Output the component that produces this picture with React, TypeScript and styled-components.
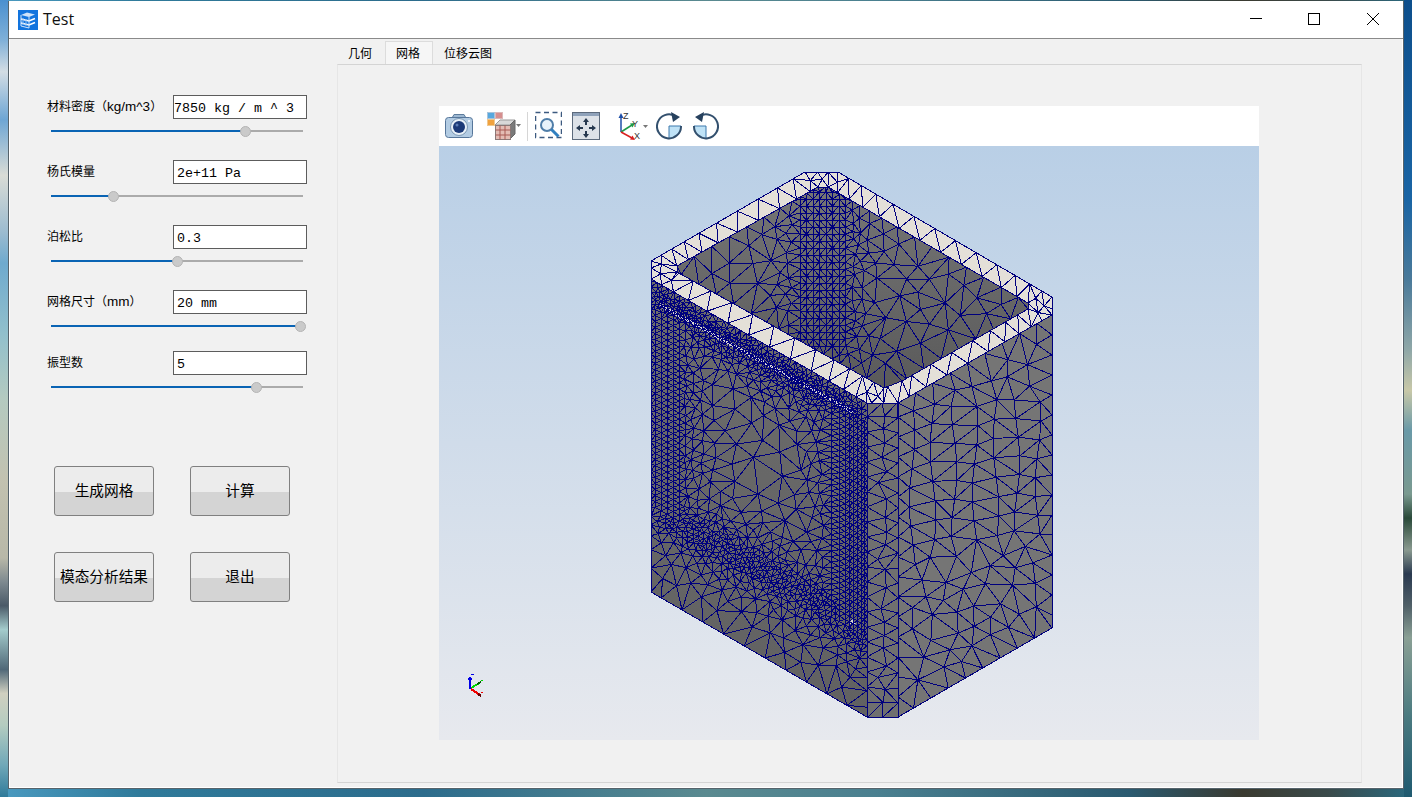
import React, { useMemo } from "react";
import styled, { createGlobalStyle } from "styled-components";

type P = [number, number];
type SizeFn = (x: number, y: number) => number;

const CJK = `"Noto Sans CJK SC", "Liberation Sans", sans-serif`;
const LABEL_FONT = `"Liberation Sans", "Noto Sans CJK SC", sans-serif`;
const MESH_BLUE = "#00007e";

const GlobalStyle = createGlobalStyle`
  html, body {
    margin: 0;
    padding: 0;
    overflow: hidden;
    font-family: ${CJK};
  }
`;

/* ---------- mesh generation ---------- */

const makeRandom = (seed: number) => () => {
  seed = (seed + 0x6d2b79f5) | 0;
  let t = Math.imul(seed ^ (seed >>> 15), 1 | seed);
  t = (t + Math.imul(t ^ (t >>> 7), 61 | t)) ^ t;
  return ((t ^ (t >>> 14)) >>> 0) / 4294967296;
};

const inside = (p: P, poly: P[]) => {
  let hit = false;
  for (let i = 0, j = poly.length - 1; i < poly.length; j = i++) {
    const [xi, yi] = poly[i];
    const [xj, yj] = poly[j];
    if (yi > p[1] !== yj > p[1] && p[0] < ((xj - xi) * (p[1] - yi)) / (yj - yi) + xi) {
      hit = !hit;
    }
  }
  return hit;
};

type Tri = { a: number; b: number; c: number; x: number; y: number; r: number };

const triangulate = (pts: P[]): Tri[] => {
  const n = pts.length;
  const all: P[] = [...pts, [-1e5, -1e5], [1e5, -1e5], [0, 1e5]];
  const make = (a: number, b: number, c: number): Tri => {
    const [ax, ay] = all[a];
    const [bx, by] = all[b];
    const [cx, cy] = all[c];
    const d = 2 * (ax * (by - cy) + bx * (cy - ay) + cx * (ay - by)) || 1e-9;
    const a2 = ax * ax + ay * ay;
    const b2 = bx * bx + by * by;
    const c2 = cx * cx + cy * cy;
    const x = (a2 * (by - cy) + b2 * (cy - ay) + c2 * (ay - by)) / d;
    const y = (a2 * (cx - bx) + b2 * (ax - cx) + c2 * (bx - ax)) / d;
    return { a, b, c, x, y, r: (ax - x) ** 2 + (ay - y) ** 2 };
  };
  let tris = [make(n, n + 1, n + 2)];
  for (let i = 0; i < n; i++) {
    const [x, y] = all[i];
    const keep: Tri[] = [];
    const edges = new Map<number, [number, number] | null>();
    const addEdge = (u: number, v: number) => {
      const key = u < v ? u * 100000 + v : v * 100000 + u;
      edges.set(key, edges.has(key) ? null : [u, v]);
    };
    for (const t of tris) {
      if ((x - t.x) ** 2 + (y - t.y) ** 2 < t.r) {
        addEdge(t.a, t.b);
        addEdge(t.b, t.c);
        addEdge(t.c, t.a);
      } else {
        keep.push(t);
      }
    }
    edges.forEach((e) => {
      if (e) keep.push(make(e[0], e[1], i));
    });
    tris = keep;
  }
  return tris.filter((t) => t.a < n && t.b < n && t.c < n);
};

const walkEdges = (poly: P[], size: SizeFn, out: P[]) => {
  poly.forEach((p, i) => {
    const q = poly[(i + 1) % poly.length];
    const len = Math.hypot(q[0] - p[0], q[1] - p[1]);
    let at = 0;
    while (at < len) {
      const x = p[0] + ((q[0] - p[0]) * at) / len;
      const y = p[1] + ((q[1] - p[1]) * at) / len;
      out.push([x, y]);
      at += size(x, y);
    }
  });
};

const meshPath = (
  poly: P[],
  size: SizeFn,
  seed: number,
  fixed: P[] = [],
  hole?: P[]
) => {
  const rnd = makeRandom(seed);
  const pts: P[] = [];
  walkEdges(poly, size, pts);
  if (hole) walkEdges(hole, size, pts);
  const isIn = (p: P) => inside(p, poly) && !(hole && inside(p, hole));
  fixed.forEach((p) => {
    if (isIn(p)) pts.push(p);
  });

  const CELL = 12;
  const buckets = new Map<number, P[]>();
  const keyOf = (cx: number, cy: number) => cx * 4096 + cy;
  const put = (p: P) => {
    const k = keyOf(Math.floor(p[0] / CELL), Math.floor(p[1] / CELL));
    if (!buckets.has(k)) buckets.set(k, []);
    buckets.get(k)!.push(p);
  };
  pts.forEach(put);

  const xs = poly.map((p) => p[0]);
  const ys = poly.map((p) => p[1]);
  const [x0, x1] = [Math.min(...xs), Math.max(...xs)];
  const [y0, y1] = [Math.min(...ys), Math.max(...ys)];
  const tries = Math.round((x1 - x0) * (y1 - y0) * 0.6);
  for (let i = 0; i < tries; i++) {
    const p: P = [x0 + rnd() * (x1 - x0), y0 + rnd() * (y1 - y0)];
    if (!isIn(p)) continue;
    const h = size(p[0], p[1]) * 0.82;
    const reach = Math.ceil(h / CELL);
    const cx = Math.floor(p[0] / CELL);
    const cy = Math.floor(p[1] / CELL);
    let free = true;
    for (let a = -reach; a <= reach && free; a++) {
      for (let b = -reach; b <= reach && free; b++) {
        for (const q of buckets.get(keyOf(cx + a, cy + b)) ?? []) {
          if (Math.hypot(q[0] - p[0], q[1] - p[1]) < h) {
            free = false;
            break;
          }
        }
      }
    }
    if (free) {
      pts.push(p);
      put(p);
    }
  }

  const jittered = pts.map((p): P => [p[0] + (rnd() - 0.5) * 0.04, p[1] + (rnd() - 0.5) * 0.04]);
  const seen = new Set<number>();
  let d = "";
  const line = (u: number, v: number) => {
    const key = u < v ? u * 100000 + v : v * 100000 + u;
    if (seen.has(key)) return;
    seen.add(key);
    d += `M${pts[u][0].toFixed(1)} ${pts[u][1].toFixed(1)}L${pts[v][0].toFixed(1)} ${pts[v][1].toFixed(1)}`;
  };
  for (const t of triangulate(jittered)) {
    const c: P = [
      (pts[t.a][0] + pts[t.b][0] + pts[t.c][0]) / 3,
      (pts[t.a][1] + pts[t.b][1] + pts[t.c][1]) / 3,
    ];
    if (!isIn(c)) continue;
    line(t.a, t.b);
    line(t.b, t.c);
    line(t.c, t.a);
  }
  return d;
};

const boxDist = (u: number, v: number, u0: number, u1: number, v0: number, v1: number) =>
  Math.hypot(Math.max(u0 - u, 0, u - u1), Math.max(v0 - v, 0, v - v1));

/* ---------- part geometry, in screenshot pixels ---------- */

const RIM_OUTER: P[] = [
  [651, 261], [805, 172], [838, 172], [1052, 297],
  [1052, 315], [898, 403], [867, 403], [651, 279],
];
const OPENING: P[] = [
  [677, 266], [818, 187], [828, 187], [1028, 303],
  [1028, 309], [902, 381], [884, 388], [677, 272],
];
const LEFT_FACE: P[] = [[651, 279], [867, 403], [867, 717], [651, 592]];
const CORNER_FACE: P[] = [[867, 403], [898, 403], [898, 717], [867, 717]];
const RIGHT_FACE: P[] = [[898, 403], [1052, 315], [1052, 628], [898, 717]];

const toPoints = (poly: P[]) => poly.map((p) => p.join(",")).join(" ");

const leftSize: SizeFn = (x, y) => {
  const u = x - 651;
  const v = y - 279 - 0.574 * u;
  return Math.min(
    24,
    3 + 0.26 * boxDist(u, v, 10, 205, 13, 21),
    4.6 + 0.26 * boxDist(u, v, 15, 195, 216, 238),
    3.8 + 0.26 * boxDist(u, v, 194, 208, 15, 240),
    6 + 0.26 * boxDist(u, v, 5, 30, 25, 228)
  );
};

const openingSize: SizeFn = (x, y) =>
  Math.min(20, 7 + 0.3 * Math.max(0, Math.abs(x - 824) - 22) + 0.12 * Math.max(0, y - 340));

const rimSize: SizeFn = (x, y) =>
  Math.min(
    24,
    9 + 0.2 * Math.hypot(x - 658, y - 272),
    9 + 0.2 * Math.hypot(x - 1042, y - 305),
    9 + 0.2 * Math.hypot(x - 822, y - 178),
    10 + 0.2 * Math.hypot(x - 878, y - 395)
  );

const grid = (cols: number[], rows: number[], at: (c: number, r: number) => P) =>
  cols.flatMap((c) => rows.map((r) => at(c, r)));

const range = (from: number, to: number, step: number) => {
  const out: number[] = [];
  for (let i = from; i <= to; i += step) out.push(i);
  return out;
};

const buildMesh = () => {
  const onLeft = (u: number, v: number): P => [651 + u, 279 + 0.574 * u + v];
  const leftFixed = [
    ...grid([4, 10, 16, 22, 28], range(28, 226, 6), onLeft),
    ...grid([180, 188, 194, 198, 202, 206, 210, 213], range(20, 238, 5.5), onLeft),
  ];
  const wallFixed = grid(range(800, 848, 6.5), range(192, 350, 7), (x, y) => [x, y]);
  const rightFixed = grid(range(912, 1040, 21), range(410, 560, 19), (x, r) => [
    x + 3 * Math.sin(r * 1.7 + x),
    r - (x - 900) * 0.08 + 3 * Math.sin(x * 2.3 + r),
  ]);
  return {
    left: meshPath(LEFT_FACE, leftSize, 11, leftFixed),
    corner: meshPath(CORNER_FACE, () => 15, 23),
    right: meshPath(RIGHT_FACE, () => 20, 37, rightFixed),
    wall: meshPath(OPENING, openingSize, 41, wallFixed),
    rim: meshPath(RIM_OUTER, rimSize, 53, [], OPENING),
  };
};

/* ---------- viewer drawing ---------- */

const MeshModel = () => {
  const mesh = useMemo(buildMesh, []);
  return (
    <svg width={820} height={594} viewBox="439 146 820 594" style={{ display: "block" }}>
      <defs>
        <linearGradient id="wallShade" x1="0" y1="0" x2="0" y2="1">
          <stop offset="0" stopColor="#757575" />
          <stop offset="1" stopColor="#5a5a5a" />
        </linearGradient>
        <linearGradient id="leftShade" x1="0" y1="0" x2="0" y2="1">
          <stop offset="0" stopColor="#6c6c6c" />
          <stop offset="1" stopColor="#616161" />
        </linearGradient>
      </defs>
      <polygon points={toPoints(RIM_OUTER)} fill="#e4e0d8" />
      <polygon points={toPoints(OPENING)} fill="url(#wallShade)" />
      <polygon points={toPoints(LEFT_FACE)} fill="url(#leftShade)" />
      <polygon points={toPoints(CORNER_FACE)} fill="#6f6f6f" />
      <polygon points={toPoints(RIGHT_FACE)} fill="#757575" />
      <polygon points="660,303 853,410 853,414 660,307" fill="#d8d6d2" />
      <polygon points="849,624 852,619 856,624" fill="#d8d6d2" />
      <g fill="none" stroke={MESH_BLUE} strokeWidth={1} shapeRendering="crispEdges">
        <path d={mesh.rim} />
        <path d={mesh.wall} />
        <path d={mesh.left} />
        <path d={mesh.corner} />
        <path d={mesh.right} />
        <polygon points={toPoints(OPENING)} />
        <polygon points={toPoints(RIM_OUTER)} />
        <polygon points={toPoints(LEFT_FACE)} />
        <polygon points={toPoints(RIGHT_FACE)} />
        <polygon points={toPoints(CORNER_FACE)} />
      </g>
      <g fill="none" strokeWidth={2} shapeRendering="crispEdges">
        <path d="M470 689V677M468 679H472" stroke="#0000e6" />
        <path d="M471 688L481 682" stroke="#00d800" />
        <path d="M477 684L481 682" stroke="#006000" />
        <path d="M471 689L480 695" stroke="#f00000" />
        <path d="M478 694L481 696" stroke="#600000" />
      </g>
      <g shapeRendering="crispEdges">
        <rect x={471} y={674} width={3} height={1} fill="#0000e6" />
        <rect x={481} y={680} width={2} height={1} fill="#00d800" />
        <rect x={481} y={692} width={2} height={1} fill="#f00000" />
      </g>
    </svg>
  );
};

const ToolIcon = styled.svg<{ $gap: number }>`
  display: block;
  flex: none;
  height: 30px;
  margin-left: ${({ $gap }) => $gap}px;
`;

const Caret = ({ x, y }: { x: number; y: number }) => (
  <path d={`M${x} ${y}h5l-2.5 3z`} fill="#777" />
);

const CameraIcon = () => (
  <ToolIcon $gap={0} width={28} viewBox="0 0 28 30">
    <path d="M7 7l2-3.500h10l2 3.500z" fill="#9db8d2" stroke="#5d7c9c" />
    <rect x={0.5} y={6.5} width={27} height={20} rx={3} fill="#b3cce3" stroke="#56769a" />
    <circle cx={14} cy={16} r={8.500} fill="#e9f1f8" stroke="#7c98b4" />
    <circle cx={14} cy={16} r={6} fill="#1c3a78" />
    <circle cx={12} cy={14} r={1.500} fill="#5c7cb4" />
    <circle cx={24} cy={10} r={1} fill="#fff" />
  </ToolIcon>
);

const DisplayModeIcon = () => (
  <ToolIcon $gap={14} width={35} viewBox="0 0 35 30">
    <rect x={0.5} y={1.500} width={7} height={6} fill="#58a8de" stroke="#a8c4dc" />
    <rect x={8.500} y={1.500} width={7} height={6} fill="#d68f8f" stroke="#dcb8b8" />
    <rect x={0.5} y={8.500} width={7} height={6} fill="#f0a23e" stroke="#f0c890" />
    <path d="M8 14l5-5h15l-5 5z" fill="#d8d8d8" stroke="#999" />
    <path d="M23 14l5-5v14l-5 5z" fill="#7a7a7a" stroke="#666" />
    <rect x={8.500} y={14.500} width={15} height={14} fill="#e3bcb4" stroke="#8a7a78" />
    <path d="M8.500 19h15M8.500 24h15M13 14.500v14M18 14.500v14" stroke="#a85a54" />
    <Caret x={29} y={13} />
  </ToolIcon>
);

const ToolDivider = styled.div`
  flex: none;
  width: 1px;
  height: 29px;
  margin-left: 5px;
  background: #d6d6d6;
`;

const ZoomWindowIcon = () => (
  <ToolIcon $gap={7} width={27} viewBox="0 0 27 30">
    <rect x={0.5} y={1.500} width={26} height={25} fill="none" stroke="#3c5a80" strokeWidth={1.500} strokeDasharray="5 3.500" />
    <circle cx={12} cy={14} r={6} fill="#e8f2fa" stroke="#4f7da8" strokeWidth={2} />
    <path d="M16.500 18.500l7 7" stroke="#2f7fc0" strokeWidth={3} />
  </ToolIcon>
);

const PanIcon = () => (
  <ToolIcon $gap={10} width={28} viewBox="0 0 28 30">
    <rect x={0.5} y={1.500} width={27} height={27} fill="#dde2e8" stroke="#5c6a7c" />
    <rect x={1} y={2} width={26} height={3} fill="#8fa2ba" />
    <path
      d="M14 7l3 4h-2v3h-2v-3h-2zM14 27l3-4h-2v-3h-2v3h-2zM4 17l4-3v2h3v2h-3v2zM24 17l-4-3v2h-3v2h3v2z"
      fill="#26384f"
    />
  </ToolIcon>
);

const TriadLetter = styled.text`
  font-family: "Liberation Sans", sans-serif;
  font-size: 9px;
  fill: #333;
`;

const TriadIcon = () => (
  <ToolIcon $gap={17} width={31} viewBox="0 0 31 30">
    <path d="M4 21V6" stroke="#1f4fa8" strokeWidth={1.500} />
    <path d="M4 2l-2.500 5h5z" fill="#1f4fa8" />
    <path d="M4 21l11-7" stroke="#1f9a4a" strokeWidth={1.500} />
    <path d="M18 12l-5 0.500 2.500 4z" fill="#1f9a4a" />
    <path d="M4 21l11 6" stroke="#d92020" strokeWidth={1.500} />
    <path d="M18 29l-5-0.500 2.500-4z" fill="#d92020" />
    <TriadLetter x={6} y={8}>Z</TriadLetter>
    <TriadLetter x={15} y={16}>Y</TriadLetter>
    <TriadLetter x={17} y={28}>X</TriadLetter>
    <Caret x={26} y={14} />
  </ToolIcon>
);

const RotateIcon = ({ flip, gap }: { flip?: boolean; gap: number }) => (
  <ToolIcon $gap={gap} width={26} viewBox="0 0 26 30">
    <g transform={flip ? "translate(26 0) scale(-1 1)" : undefined}>
      <path d="M13 15H25A12 12 0 0 1 13 27Z" fill="#bfe2f6" />
      <path d="M13 15H25M13 15V27" stroke="#3d78ac" fill="none" />
      <path d="M19 5A12 12 0 1 0 25 15" fill="none" stroke="#33506e" strokeWidth={2} />
      <path d="M15 1l9 5-7 5z" fill="#27415e" />
    </g>
  </ToolIcon>
);

/* ---------- window chrome icons ---------- */

const TitleLogo = () => (
  <svg width={20} height={20} viewBox="0 0 20 20" style={{ flex: "none" }}>
    <rect width={20} height={20} fill="#1274de" />
    <path d="M3 5l6-2.500 8 2-6 2.500z" fill="#cfe3fa" />
    <path d="M3 9l8 2 6-2.500M3 13l8 2 6-2.500" fill="none" stroke="#fff" strokeWidth={1.500} />
    <path d="M3 5v11l8 2V7" fill="none" stroke="#cfe3fa" />
    <path d="M5 8v7M8 9v7" stroke="#8dbcf0" />
  </svg>
);

const CaptionGlyph = styled.svg`
  display: block;
`;

const captionIcons = [
  <CaptionGlyph key="min" width={12} height={12} viewBox="0 0 12 12">
    <path d="M0 5.500H12" stroke="#000" />
  </CaptionGlyph>,
  <CaptionGlyph key="max" width={12} height={12} viewBox="0 0 12 12">
    <rect x={0.5} y={0.5} width={11} height={11} fill="none" stroke="#000" />
  </CaptionGlyph>,
  <CaptionGlyph key="close" width={12} height={12} viewBox="0 0 12 12">
    <path d="M0 0L12 12M12 0L0 12" stroke="#000" />
  </CaptionGlyph>,
];

/* ---------- left panel data ---------- */

type FieldData = {
  label: string;
  unit?: string;
  value: string;
  handle: number;
  height: number;
  indent: number;
};

const fields: FieldData[] = [
  { label: "材料密度", unit: "kg/m^3", value: "7850 kg / m ^ 3", handle: 194.5, height: 65, indent: 0 },
  { label: "杨氏模量", value: "2e+11 Pa", handle: 62, height: 65, indent: 3 },
  { label: "泊松比", value: "0.3", handle: 126.5, height: 65, indent: 3 },
  { label: "网格尺寸", unit: "mm", value: "20 mm", handle: 249, height: 61, indent: 3 },
  { label: "振型数", value: "5", handle: 205, height: 61, indent: 3 },
];

const tabs = ["几何", "网格", "位移云图"];
const actions = ["生成网格", "计算", "模态分析结果", "退出"];

export default function App() {
  return (
    <Desktop>
      <GlobalStyle />
      <Window>
        <TitleBar>
          <TitleLogo />
          <TitleText>Test</TitleText>
          <CaptionButtons>
            {captionIcons.map((icon) => (
              <CaptionButton key={icon.key}>{icon}</CaptionButton>
            ))}
          </CaptionButtons>
        </TitleBar>
        <Client>
          <SidePanel>
            {fields.map((field) => (
              <Field key={field.label} $height={field.height}>
                <FieldHead>
                  <FieldLabel>
                    {field.label}
                    {field.unit ? (
                      <>
                        （<FieldUnit>{field.unit}</FieldUnit>）
                      </>
                    ) : null}
                  </FieldLabel>
                  <ValueInput $indent={field.indent} value={field.value} readOnly />
                </FieldHead>
                <SliderTrack>
                  <SliderFill $width={field.handle} />
                  <SliderHandle $left={field.handle} />
                </SliderTrack>
              </Field>
            ))}
            <ActionGrid>
              {actions.map((action) => (
                <ActionButton key={action}>{action}</ActionButton>
              ))}
            </ActionGrid>
          </SidePanel>
          <TabArea>
            <TabBar>
              {tabs.map((tab) => (
                <Tab key={tab} $active={tab === "网格"}>
                  {tab}
                </Tab>
              ))}
            </TabBar>
            <TabPane>
              <Viewer>
                <Toolbar>
                  <CameraIcon />
                  <DisplayModeIcon />
                  <ToolDivider />
                  <ZoomWindowIcon />
                  <PanIcon />
                  <TriadIcon />
                  <RotateIcon gap={8} />
                  <RotateIcon flip gap={11} />
                </Toolbar>
                <Canvas>
                  <MeshModel />
                </Canvas>
              </Viewer>
            </TabPane>
          </TabArea>
        </Client>
      </Window>
    </Desktop>
  );
}

const Desktop = styled.div`
  width: 1412px;
  height: 797px;
  box-sizing: border-box;
  padding: 1px 8px 8px;
  overflow: hidden;
  background:
    linear-gradient(
        180deg,
        #4a90d0 0%, #7fb0d8 5%, #d3dde4 9%, #6ea6d4 15%, #d9dcd6 22%, #9dbcd0 29%,
        #6faace 33%, #92c0cc 42%, #b4cac0 50%, #c2c2b0 60%, #b8b8a8 70%, #7e8a90 73%,
        #4a5a68 76%, #a4cccc 79%, #506878 84%, #d0d0c0 87%, #b4ccc0 91%, #70a8b8 96%, #2f7a9a 100%
      )
      left top / 8px 100% no-repeat,
    linear-gradient(
        180deg,
        #0d4f8c 0%, #1a65a5 25%, #4a7a9a 35%, #90a8a8 44%, #c8c8a8 49%, #6a9aa8 54%,
        #7a9a90 62%, #2a4a3a 65%, #8a9a90 69%, #2a3a50 72%, #506068 76%, #8aa095 80%,
        #4a7a80 90%, #1f5a70 100%
      )
      right top / 8px 100% no-repeat,
    linear-gradient(
        90deg,
        #4a9ac0 0%, #2f7a9a 10%, #2c6c8c 30%, #5a8a90 50%, #4a8090 62%, #2a5a70 80%,
        #3a3a30 88%, #3a4a4a 94%, #2a6a80 100%
      );
`;

const Window = styled.div`
  display: flex;
  flex-direction: column;
  height: 788px;
  box-sizing: border-box;
  border: 1px solid #56636b;
  border-top: none;
`;

const TitleBar = styled.div`
  display: flex;
  align-items: center;
  flex: none;
  height: 37px;
  padding-left: 9px;
  background: #fff;
  border-bottom: 1px solid #8a8a8a;
`;

const TitleText = styled.span`
  margin: -1px 0 0 5px;
  font-family: "Open Sans", sans-serif;
  font-size: 16px;
  color: #111;
`;

const CaptionButtons = styled.div`
  display: flex;
  align-self: stretch;
  margin: 0 1px 0 auto;
  padding-bottom: 2px;
`;

const CaptionButton = styled.div`
  display: flex;
  align-items: center;
  justify-content: center;
  width: 58.5px;
`;

const Client = styled.div`
  display: flex;
  flex: 1;
  min-height: 0;
  background: #f1f1f1;
  border: 1px solid #fff;
  border-top: none;
`;

const SidePanel = styled.div`
  flex: none;
  width: 327px;
  box-sizing: border-box;
  padding: 56px 0 0 36px;
`;

const Field = styled.div<{ $height: number }>`
  height: ${({ $height }) => $height}px;
`;

const FieldHead = styled.div`
  display: flex;
  align-items: center;
  height: 24px;
`;

const FieldLabel = styled.span`
  flex: none;
  width: 126px;
  padding-left: 1px;
  margin-top: -1px;
  font-family: ${LABEL_FONT};
  font-size: 12px;
  line-height: 16px;
  color: #000;
  white-space: nowrap;
`;

const FieldUnit = styled.span`
  font-size: 13.5px;
`;

const ValueInput = styled.input<{ $indent: number }>`
  flex: none;
  width: 134px;
  height: 24px;
  box-sizing: border-box;
  padding: 2px 0 0 ${({ $indent }) => $indent}px;
  border: 1px solid #5c5c5c;
  border-radius: 0;
  outline: none;
  background: #fff;
  color: #000;
  font-family: "Liberation Mono", monospace;
  font-size: 13.33px;
`;

const SliderTrack = styled.div`
  position: relative;
  width: 252px;
  height: 2px;
  margin: 11px 0 0 5px;
  background: #ababab;
`;

const SliderFill = styled.div<{ $width: number }>`
  width: ${({ $width }) => $width}px;
  height: 100%;
  background: #0a64b4;
`;

const SliderHandle = styled.div<{ $left: number }>`
  position: absolute;
  top: -4.500px;
  left: ${({ $left }) => $left - 5.5}px;
  width: 11px;
  height: 11px;
  box-sizing: border-box;
  border: 1px solid #b4b4b4;
  border-radius: 50%;
  background: #cacaca;
`;

const ActionGrid = styled.div`
  display: grid;
  grid-template-columns: 100px 100px;
  grid-auto-rows: 50px;
  gap: 36px;
  margin: 54px 0 0 8px;
`;

const ActionButton = styled.button`
  padding: 0 0 4px;
  border: 1px solid #808080;
  border-radius: 3px;
  background: linear-gradient(180deg, #ececec 0, #ececec 25px, #d4d4d4 25px, #d4d4d4 100%);
  color: #000;
  font-family: ${CJK};
  font-size: 14.67px;
  white-space: nowrap;
`;

const TabArea = styled.div`
  display: flex;
  flex-direction: column;
  width: 1025px;
  padding-top: 2px;
`;

const TabBar = styled.div`
  display: flex;
  flex: none;
  height: 23px;
`;

const Tab = styled.div<{ $active?: boolean }>`
  box-sizing: border-box;
  padding: 0 12px 0 10px;
  font-size: 12px;
  line-height: 22px;
  color: #000;
  background: ${({ $active }) => ($active ? "#f6f6f6" : "transparent")};
  border: 1px solid ${({ $active }) => ($active ? "#dcdcdc" : "transparent")};
  border-bottom: none;
`;

const TabPane = styled.div`
  height: 719px;
  box-sizing: border-box;
  padding: 41px 0 0 101px;
  border: 1px solid #e6e6e6;
  border-top-color: #d4d4d4;
  border-bottom-color: #d4d4d4;
`;

const Viewer = styled.div`
  width: 820px;
  height: 634px;
`;

const Toolbar = styled.div`
  display: flex;
  align-items: center;
  height: 40px;
  box-sizing: border-box;
  padding-left: 6px;
  background: #fff;
`;

const Canvas = styled.div`
  height: 594px;
  background: linear-gradient(180deg, #b9cfe6 0%, #e7e9ee 100%);
`;
